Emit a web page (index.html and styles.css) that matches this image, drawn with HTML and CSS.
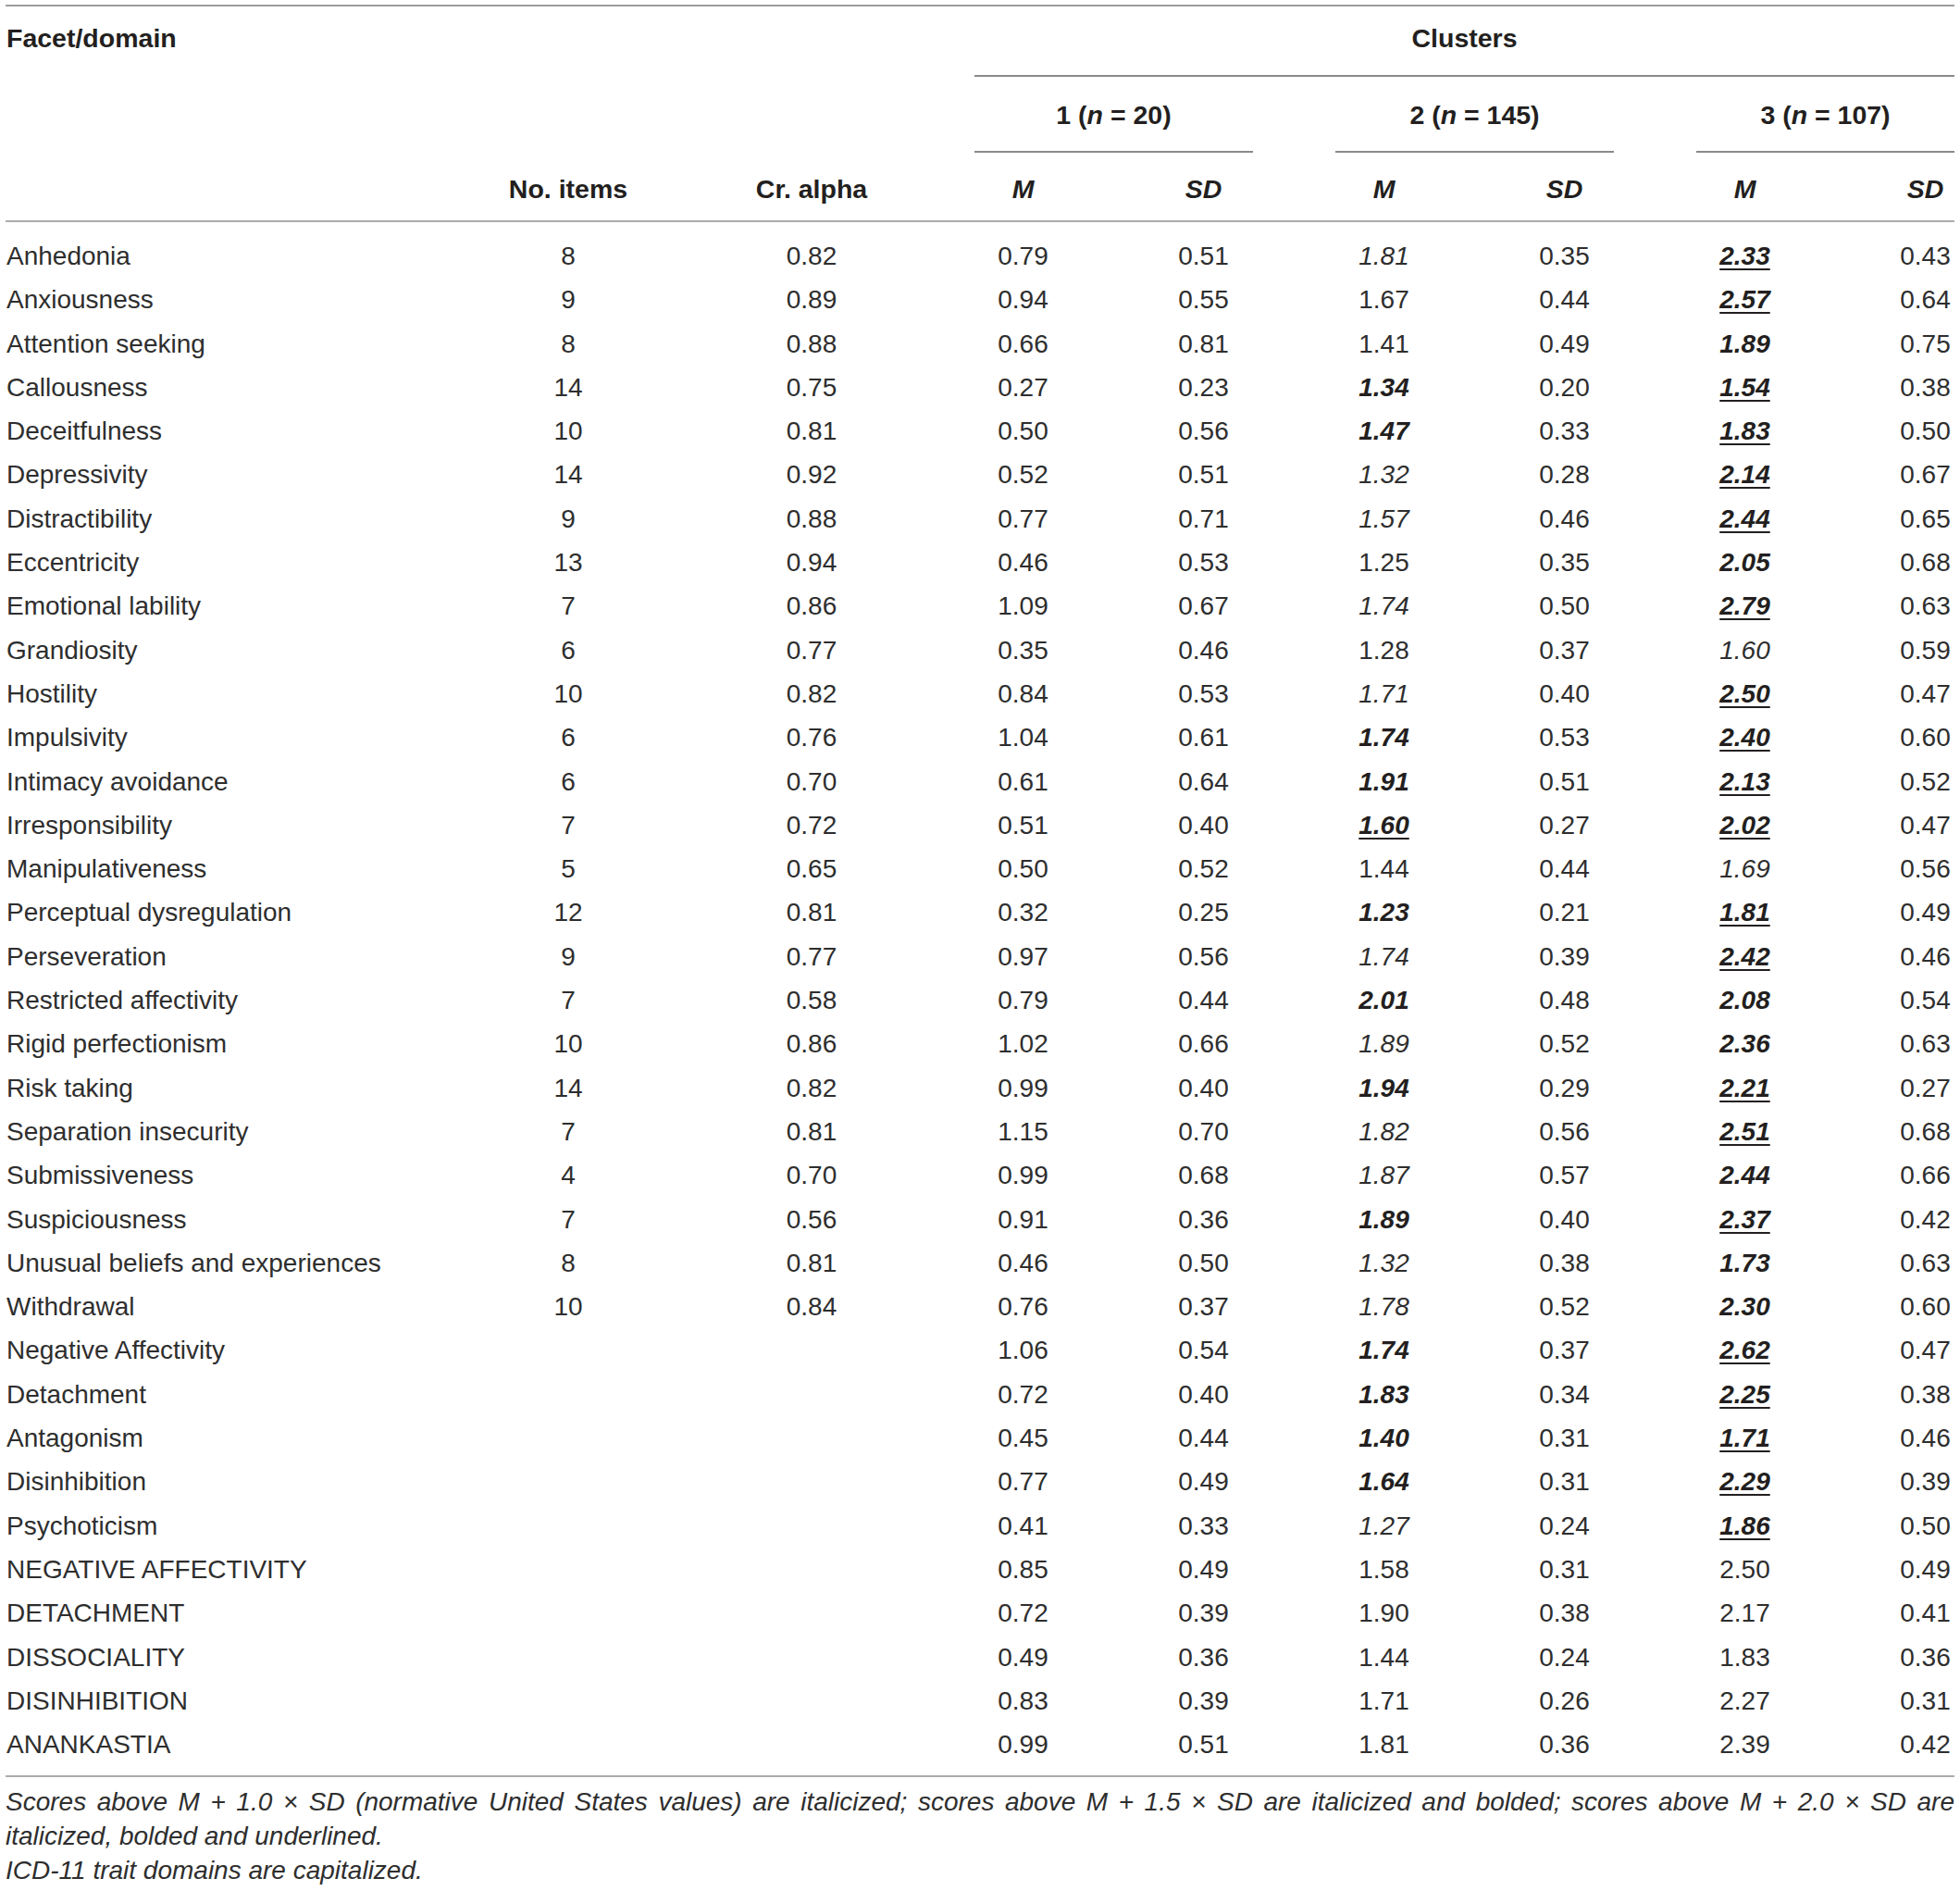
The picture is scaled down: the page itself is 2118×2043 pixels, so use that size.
FILE: index.html
```html
<!DOCTYPE html>
<html lang="en">
<head>
    <meta charset="UTF-8">
    <title>Cluster means of PID-5 facets and domains</title>
    <link rel="stylesheet" href="styles.css">
</head>
<body>
    <div class="wrap">
        <table class="stats">
            <colgroup>
                <col class="c-name">
                <col class="c-items">
                <col class="c-alpha">
                <col class="c-num">
                <col class="c-num">
                <col class="c-num">
                <col class="c-num">
                <col class="c-num">
                <col class="c-last">
            </colgroup>
            <thead>
                <tr class="h1">
                    <th class="name">Facet/domain</th>
                    <th></th>
                    <th></th>
                    <th colspan="6"><div class="clusters">Clusters</div></th>
                </tr>
                <tr class="h2">
                    <th></th>
                    <th></th>
                    <th></th>
                    <th colspan="2"><div class="grp">1 (<i>n</i> = 20)</div></th>
                    <th colspan="2"><div class="grp">2 (<i>n</i> = 145)</div></th>
                    <th colspan="2"><div class="grp end">3 (<i>n</i> = 107)</div></th>
                </tr>
                <tr class="h3">
                    <th></th>
                    <th>No. items</th>
                    <th>Cr. alpha</th>
                    <th><i>M</i></th>
                    <th><i>SD</i></th>
                    <th><i>M</i></th>
                    <th><i>SD</i></th>
                    <th><i>M</i></th>
                    <th class="last"><i>SD</i></th>
                </tr>
            </thead>
            <tbody>
                <tr><td class="name">Anhedonia</td><td>8</td><td>0.82</td><td>0.79</td><td>0.51</td><td class="it">1.81</td><td>0.35</td><td class="biu">2.33</td><td class="last">0.43</td></tr>
                <tr><td class="name">Anxiousness</td><td>9</td><td>0.89</td><td>0.94</td><td>0.55</td><td>1.67</td><td>0.44</td><td class="biu">2.57</td><td class="last">0.64</td></tr>
                <tr><td class="name">Attention seeking</td><td>8</td><td>0.88</td><td>0.66</td><td>0.81</td><td>1.41</td><td>0.49</td><td class="bi">1.89</td><td class="last">0.75</td></tr>
                <tr><td class="name">Callousness</td><td>14</td><td>0.75</td><td>0.27</td><td>0.23</td><td class="bi">1.34</td><td>0.20</td><td class="biu">1.54</td><td class="last">0.38</td></tr>
                <tr><td class="name">Deceitfulness</td><td>10</td><td>0.81</td><td>0.50</td><td>0.56</td><td class="bi">1.47</td><td>0.33</td><td class="biu">1.83</td><td class="last">0.50</td></tr>
                <tr><td class="name">Depressivity</td><td>14</td><td>0.92</td><td>0.52</td><td>0.51</td><td class="it">1.32</td><td>0.28</td><td class="biu">2.14</td><td class="last">0.67</td></tr>
                <tr><td class="name">Distractibility</td><td>9</td><td>0.88</td><td>0.77</td><td>0.71</td><td class="it">1.57</td><td>0.46</td><td class="biu">2.44</td><td class="last">0.65</td></tr>
                <tr><td class="name">Eccentricity</td><td>13</td><td>0.94</td><td>0.46</td><td>0.53</td><td>1.25</td><td>0.35</td><td class="bi">2.05</td><td class="last">0.68</td></tr>
                <tr><td class="name">Emotional lability</td><td>7</td><td>0.86</td><td>1.09</td><td>0.67</td><td class="it">1.74</td><td>0.50</td><td class="biu">2.79</td><td class="last">0.63</td></tr>
                <tr><td class="name">Grandiosity</td><td>6</td><td>0.77</td><td>0.35</td><td>0.46</td><td>1.28</td><td>0.37</td><td class="it">1.60</td><td class="last">0.59</td></tr>
                <tr><td class="name">Hostility</td><td>10</td><td>0.82</td><td>0.84</td><td>0.53</td><td class="it">1.71</td><td>0.40</td><td class="biu">2.50</td><td class="last">0.47</td></tr>
                <tr><td class="name">Impulsivity</td><td>6</td><td>0.76</td><td>1.04</td><td>0.61</td><td class="bi">1.74</td><td>0.53</td><td class="biu">2.40</td><td class="last">0.60</td></tr>
                <tr><td class="name">Intimacy avoidance</td><td>6</td><td>0.70</td><td>0.61</td><td>0.64</td><td class="bi">1.91</td><td>0.51</td><td class="biu">2.13</td><td class="last">0.52</td></tr>
                <tr><td class="name">Irresponsibility</td><td>7</td><td>0.72</td><td>0.51</td><td>0.40</td><td class="biu">1.60</td><td>0.27</td><td class="biu">2.02</td><td class="last">0.47</td></tr>
                <tr><td class="name">Manipulativeness</td><td>5</td><td>0.65</td><td>0.50</td><td>0.52</td><td>1.44</td><td>0.44</td><td class="it">1.69</td><td class="last">0.56</td></tr>
                <tr><td class="name">Perceptual dysregulation</td><td>12</td><td>0.81</td><td>0.32</td><td>0.25</td><td class="bi">1.23</td><td>0.21</td><td class="biu">1.81</td><td class="last">0.49</td></tr>
                <tr><td class="name">Perseveration</td><td>9</td><td>0.77</td><td>0.97</td><td>0.56</td><td class="it">1.74</td><td>0.39</td><td class="biu">2.42</td><td class="last">0.46</td></tr>
                <tr><td class="name">Restricted affectivity</td><td>7</td><td>0.58</td><td>0.79</td><td>0.44</td><td class="bi">2.01</td><td>0.48</td><td class="bi">2.08</td><td class="last">0.54</td></tr>
                <tr><td class="name">Rigid perfectionism</td><td>10</td><td>0.86</td><td>1.02</td><td>0.66</td><td class="it">1.89</td><td>0.52</td><td class="bi">2.36</td><td class="last">0.63</td></tr>
                <tr><td class="name">Risk taking</td><td>14</td><td>0.82</td><td>0.99</td><td>0.40</td><td class="bi">1.94</td><td>0.29</td><td class="biu">2.21</td><td class="last">0.27</td></tr>
                <tr><td class="name">Separation insecurity</td><td>7</td><td>0.81</td><td>1.15</td><td>0.70</td><td class="it">1.82</td><td>0.56</td><td class="biu">2.51</td><td class="last">0.68</td></tr>
                <tr><td class="name">Submissiveness</td><td>4</td><td>0.70</td><td>0.99</td><td>0.68</td><td class="it">1.87</td><td>0.57</td><td class="bi">2.44</td><td class="last">0.66</td></tr>
                <tr><td class="name">Suspiciousness</td><td>7</td><td>0.56</td><td>0.91</td><td>0.36</td><td class="bi">1.89</td><td>0.40</td><td class="biu">2.37</td><td class="last">0.42</td></tr>
                <tr><td class="name">Unusual beliefs and experiences</td><td>8</td><td>0.81</td><td>0.46</td><td>0.50</td><td class="it">1.32</td><td>0.38</td><td class="bi">1.73</td><td class="last">0.63</td></tr>
                <tr><td class="name">Withdrawal</td><td>10</td><td>0.84</td><td>0.76</td><td>0.37</td><td class="it">1.78</td><td>0.52</td><td class="bi">2.30</td><td class="last">0.60</td></tr>
                <tr><td class="name">Negative Affectivity</td><td></td><td></td><td>1.06</td><td>0.54</td><td class="bi">1.74</td><td>0.37</td><td class="biu">2.62</td><td class="last">0.47</td></tr>
                <tr><td class="name">Detachment</td><td></td><td></td><td>0.72</td><td>0.40</td><td class="bi">1.83</td><td>0.34</td><td class="biu">2.25</td><td class="last">0.38</td></tr>
                <tr><td class="name">Antagonism</td><td></td><td></td><td>0.45</td><td>0.44</td><td class="bi">1.40</td><td>0.31</td><td class="biu">1.71</td><td class="last">0.46</td></tr>
                <tr><td class="name">Disinhibition</td><td></td><td></td><td>0.77</td><td>0.49</td><td class="bi">1.64</td><td>0.31</td><td class="biu">2.29</td><td class="last">0.39</td></tr>
                <tr><td class="name">Psychoticism</td><td></td><td></td><td>0.41</td><td>0.33</td><td class="it">1.27</td><td>0.24</td><td class="biu">1.86</td><td class="last">0.50</td></tr>
                <tr><td class="name">NEGATIVE AFFECTIVITY</td><td></td><td></td><td>0.85</td><td>0.49</td><td>1.58</td><td>0.31</td><td>2.50</td><td class="last">0.49</td></tr>
                <tr><td class="name">DETACHMENT</td><td></td><td></td><td>0.72</td><td>0.39</td><td>1.90</td><td>0.38</td><td>2.17</td><td class="last">0.41</td></tr>
                <tr><td class="name">DISSOCIALITY</td><td></td><td></td><td>0.49</td><td>0.36</td><td>1.44</td><td>0.24</td><td>1.83</td><td class="last">0.36</td></tr>
                <tr><td class="name">DISINHIBITION</td><td></td><td></td><td>0.83</td><td>0.39</td><td>1.71</td><td>0.26</td><td>2.27</td><td class="last">0.31</td></tr>
                <tr><td class="name">ANANKASTIA</td><td></td><td></td><td>0.99</td><td>0.51</td><td>1.81</td><td>0.36</td><td>2.39</td><td class="last">0.42</td></tr>
            </tbody>
        </table>

        <div class="notes">
            <p class="note">Scores above M + 1.0 × SD (normative United States values) are italicized; scores above M + 1.5 × SD are italicized and bolded; scores above M + 2.0 × SD are italicized, bolded and underlined.</p>
            <p class="note">ICD-11 trait domains are capitalized.</p>
        </div>
    </div>
</body>
</html>
```

FILE: styles.css
```css
body {
    margin: 0;
    background: #fff;
    color: #2e2e2e;
    font-family: "Liberation Sans", Arial, sans-serif;
    font-size: 28px;
}

.wrap {
    padding: 5px 6px 0;
}

/* table */
.stats {
    width: 2106px;
    table-layout: fixed;
    border-collapse: separate;
    border-spacing: 0;
    border-top: 2px solid #9c9c9c;
    border-bottom: 2px solid #ababab;
}

.c-name { width: 476px; }
.c-items { width: 264px; }
.c-alpha { width: 262px; }
.c-num { width: 195px; }
.c-last { width: 129px; }

th {
    padding: 0;
    font-weight: bold;
    color: #231f20;
    font-size: 28.5px;
    vertical-align: top;
    text-align: center;
}

th.name,
td.name {
    text-align: left;
    padding-left: 1px;
}

.h1 th {
    line-height: 68px;
}

.clusters {
    line-height: 68px;
    padding-bottom: 6px;
    margin-left: 45px;
    border-bottom: 2px solid #8a8a8a;
}

.grp {
    line-height: 78px;
    padding-top: 2px;
    margin: 0 44px 0 45px;
    border-bottom: 2px solid #8a8a8a;
}

.grp.end {
    margin-right: 0;
}

.h3 th {
    line-height: 68px;
    padding-top: 5px;
    border-bottom: 2px solid #ababab;
}

td {
    padding: 0;
    line-height: 47.3px;
    text-align: center;
    white-space: nowrap;
}

.stats .last {
    padding-left: 66px;
}

tbody tr:first-child td {
    padding-top: 13px;
}

tbody tr:last-child td {
    padding-bottom: 10px;
}

.it {
    font-style: italic;
}

.bi {
    font-style: italic;
    font-weight: bold;
    color: #231f20;
}

.biu {
    font-style: italic;
    font-weight: bold;
    color: #231f20;
    text-decoration: underline;
    text-decoration-thickness: 2px;
    text-underline-offset: 4px;
}

/* footnotes */
.notes {
    width: 2106px;
    padding-top: 8px;
}

.note {
    margin: 0;
    font-style: italic;
    line-height: 37px;
    text-align: justify;
}
```
